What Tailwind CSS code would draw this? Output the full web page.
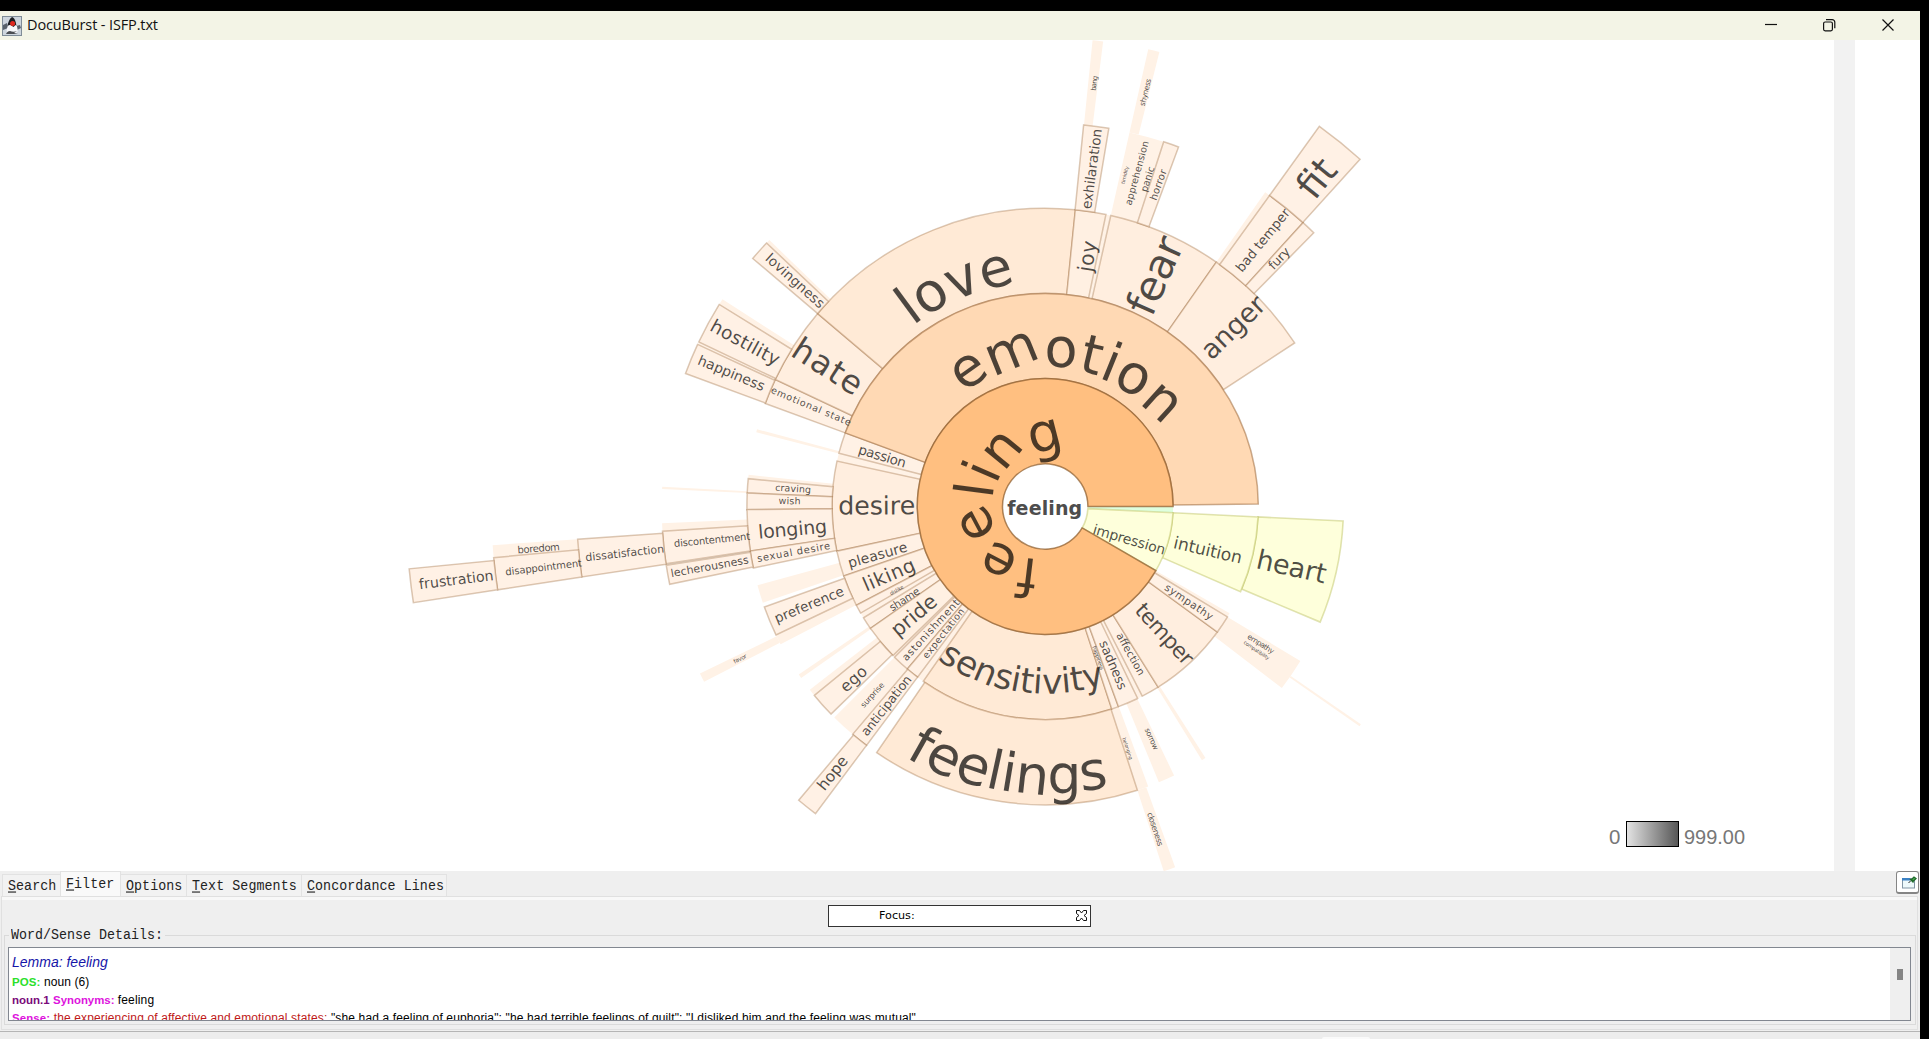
<!DOCTYPE html>
<html lang="en">
<head>
<meta charset="utf-8">
<title>DocuBurst - ISFP.txt</title>
<script src="https://cdn.jsdelivr.net/npm/@tailwindcss/browser@4"></script>
</head>
<body class="bg-black">
<div class="flex h-[1039px] w-[1920px] flex-col overflow-hidden bg-[#efefef] pt-0">
  <div class="h-[11px] shrink-0 bg-black"></div>

  <header class="flex h-[29px] shrink-0 items-center bg-[#f3f4e6] pl-[2px]">
    <svg class="h-5 w-5" viewBox="0 0 20 20">
      <rect x=".5" y=".5" width="19" height="19" fill="#cdd5dd" stroke="#7f8c97"/>
      <path d="M1 9l4-2 1 5-5 2zM14 10l4-1 1 3-4 2z" fill="#59626b"/>
      <path d="M10 1.500c3 1 4 5 5 9s1 6-1 6.500c-4 0-8 .5-9-1s0-4 1-6 2-7 4-8.500z" fill="#f7f8fa"/>
      <path d="M10 1c-3 2-4 6-4.500 9 1-1 2-1 3-1l3 2 2-2 1 1C14 6 13 2 10 1z" fill="#1d1f22"/>
      <circle cx="10.600" cy="7.500" r="2.500" fill="#e02a20"/>
      <path d="M4 18c1-2 2-3 4-3 2 1 5 1 7 0l-3 2 4 1z" fill="#4a4d52"/>
    </svg>
    <span class="mb-[1px] ml-[5px] w-[132px] whitespace-nowrap font-['Open_Sans',sans-serif] text-[14.500px] leading-[28px] tracking-[-0.130px] text-[#111]">DocuBurst - ISFP.txt</span>
    <svg class="mb-[1px] ml-auto mr-[24px] h-[14px] w-[132px]" viewBox="0 0 132 14" fill="none" stroke="#111" stroke-width="1.200">
      <path d="M1 6.500h12"/>
      <rect x="59.600" y="4" width="8.800" height="8.800" rx="1.500"/>
      <path d="M62 1.600h6.200a2.600 2.600 0 0 1 2.600 2.600v6"/>
      <path d="M118.500 1.500l11 11M129.500 1.500l-11 11"/>
    </svg>
  </header>

  <main class="flex h-[831px] shrink-0 bg-white">
    <svg id="burst" class="h-[831px] w-[1834px] shrink-0" viewBox="0 40 1834 831" font-family="'DejaVu Sans',sans-serif">
      <defs>
        <linearGradient id="ramp"><stop offset="0" stop-color="#e4e4e4"/><stop offset="1" stop-color="#555"/></linearGradient>
      </defs>
      <g id="sectors"></g>
      <g id="labels" fill="#000" fill-opacity=".7"></g>
      <text x="1044.700" y="514.500" text-anchor="middle" font-weight="bold" font-size="19" textLength="75" fill="#4d4d4d">feeling</text>
      <g font-family="'Liberation Sans',sans-serif" font-size="20.500" fill="#777">
        <text x="1609" y="844">0</text>
        <text x="1684" y="844" textLength="61" lengthAdjust="spacingAndGlyphs">999.00</text>
      </g>
      <rect x="1626.500" y="821.500" width="52" height="25" fill="url(#ramp)" stroke="#000"/>
    </svg>
    <div class="w-[21px] bg-[#f2f2f2]"></div>
  </main>

  <nav class="flex h-[25px] shrink-0 items-end pl-[2px] font-['Liberation_Mono',monospace] text-[13.330px] leading-[20px] tracking-[0.060px] text-[#222]">
    <div class="h-[22px] w-[58px] border-l border-t border-[#e2e2e2] bg-[#f2f2f2] pl-[5px] pt-[2px]"><span class="inline-block scale-y-[1.120]"><u>S</u>earch</span></div>
    <div class="h-[25px] w-[61px] border-x border-t border-[#e2e2e2] bg-[#f9f9f9] pl-[5px] pt-[3px]"><span class="inline-block scale-y-[1.120]"><u>F</u>ilter</span></div>
    <div class="h-[22px] w-[66px] border-r border-t border-[#e2e2e2] bg-[#f2f2f2] pl-[5px] pt-[2px]"><span class="inline-block scale-y-[1.120]"><u>O</u>ptions</span></div>
    <div class="h-[22px] w-[115px] whitespace-nowrap border-r border-t border-[#e2e2e2] bg-[#f2f2f2] pl-[5px] pt-[2px]"><span class="inline-block scale-y-[1.120]"><u>T</u>ext Segments</span></div>
    <div class="h-[22px] w-[145px] whitespace-nowrap border-r border-t border-[#e2e2e2] bg-[#f2f2f2] pl-[5px] pt-[2px]"><span class="inline-block scale-y-[1.120]"><u>C</u>oncordance Lines</span></div>
    <button class="mb-[2px] ml-auto mr-[1px] flex h-[23px] w-[23px] items-center justify-center rounded-[3px] border border-b-2 border-[#858585] bg-white pl-[3px]">
      <svg class="h-[14px] w-[15px]" viewBox="0 0 15 14">
        <rect x=".5" y="3.500" width="12" height="9.500" fill="#eef9fb" stroke="#8296a5"/>
        <rect x="0" y="3" width="8" height="2.500" fill="#3c82c4"/>
        <path d="M6.500 8l2.500-2.500" stroke="#222"/>
        <path d="M8 4l3.500 3.500M9.500 4.500l2.500-2.500 2 1.500-3 3z" stroke="#1f6b2c" stroke-width="1.300" fill="#55b055"/>
      </svg>
    </button>
  </nav>

  <section class="ml-[1px] mr-[2px] flex h-[134px] shrink-0 flex-col border border-[#e0e0e0]">
    <div class="h-[3px] shrink-0 bg-[#f8f8f8]"></div>
    <div class="flex h-[31px] shrink-0 items-start justify-center pt-[5px]">
      <div class="flex h-[22px] w-[263px] items-center border border-[#333] bg-white pl-[50px] font-['DejaVu_Sans',sans-serif] text-[11.200px] leading-[20px] text-black">
        Focus:
        <svg class="mb-[1px] ml-auto mr-[3px] h-[11px] w-[11px]" viewBox="0 0 11 11" fill="none" stroke="#111"><path d="M.5.5h3l2 2.500 2-2.500h3v3l-2.500 2 2.500 2v3h-3l-2-2.500-2 2.500h-3v-3l2.500-2-2.500-2z"/></svg>
      </div>
    </div>
    <div class="relative ml-[2px] mr-[1px] mt-[4px] h-[90px] border border-[#dadada] pl-[3px] pr-[4px] pt-[11px]">
      <span class="absolute -top-[8px] left-[4px] bg-[#efefef] px-[2px] font-['Liberation_Mono',monospace] text-[13.330px] leading-[16px] text-[#222]"><span class="inline-block scale-y-[1.120]">Word/Sense Details:</span></span>
      <div class="flex h-[74px] border border-[#828790] bg-white font-['Liberation_Sans',sans-serif] text-[12px] text-black">
        <div class="flex-1 overflow-hidden whitespace-nowrap pl-[3px] pt-[4px]">
          <p class="h-[20px] text-[14px] italic leading-[20px] text-[#1515a8]">Lemma: feeling</p>
          <p class="h-[18px] leading-[20px] tracking-[0.100px]"><b class="text-[11.500px] text-[#2be02b]">POS:</b> noun (6)</p>
          <p class="h-[18px] leading-[20px]"><b class="text-[11.500px] text-[#7a0a7a]">noun.1</b> <b class="text-[11.400px] text-[#dd12dd]">Synonyms:</b> <span class="tracking-[0.150px]">feeling</span></p>
          <p class="h-[18px] leading-[20px] tracking-[0.140px]"><b class="text-[11.400px] text-[#dd12dd]">Sense:</b> <span class="text-[#c01818]">the experiencing of affective and emotional states:</span> "she had a feeling of euphoria"; "he had terrible feelings of guilt"; "I disliked him and the feeling was mutual"</p>
        </div>
        <div class="w-[20px] bg-[#efefef] pl-[7px] pt-[21px]"><div class="h-[11px] w-[6px] bg-[#858585]"></div></div>
      </div>
    </div>
  </section>
  <footer class="mt-[1px] flex h-[8px] items-end border-t border-[#b5b5b5] bg-[#ededed]"><div class="ml-[1322px] h-[2px] w-[48px] rounded-t bg-[#fafafa]"></div></footer>
</div>

<script>
const NS = 'http://www.w3.org/2000/svg', CX = 1045.2, CY = 506.5;
const radius = k => 42.7 + 85.2 * k;
const rad = d => d * Math.PI / 180;
const pt = (r, a) => [CX + r * Math.cos(rad(a)), CY + r * Math.sin(rad(a))];
const add = (parent, tag, attrs, text) => {
  const el = document.createElementNS(NS, tag);
  for (const k in attrs) el.setAttribute(k, attrs[k]);
  if (text) el.textContent = text;
  document.getElementById(parent).append(el);
  return el;
};
function sector(k, a0, a1, fill, stroke, so, sw) {
  const r0 = radius(k), r1 = radius(k + 1), big = a1 - a0 > 180 ? 1 : 0;
  const p = [pt(r0, a0), pt(r1, a0), pt(r1, a1), pt(r0, a1)].map(q => q.map(v => v.toFixed(2)).join(' '));
  add('sectors', 'path', {
    d: `M${p[0]}L${p[1]}A${r1} ${r1} 0 ${big} 1 ${p[2]}L${p[3]}A${r0} ${r0} 0 ${big} 0 ${p[0]}Z`,
    fill, stroke: stroke || 'none', 'stroke-opacity': so || 1, 'stroke-width': sw || 1.5
  });
}
const BROWN = '#96602f', FAINT = '#fff2e6';
// unlabelled or low-count nodes: [level, from, to]
[[4,275.8,277.1],[4,282.7,284.1],[3,282.7,288],[3,305,305.8],[3,223.4,224],[3,211.8,212.7],[3,205,205.4],
 [2,281.8,282.6],[1,192.3,194.5],[2,194.4,195],[2,185.4,186.1],[3,182.6,182.95],[3,176.3,177.5],[5,174.7,176],
 [2,161.2,164.7],[2,152.5,154.5],[3,152.8,154.2],[2,144.9,145.7],[2,140.7,142.1],[2,130.2,135],
 [1,150,152.4],[1,148.5,150],[1,135,135.6],[1,124.9,126.8],[2,69.8,72],[3,70.2,72],[2,64.4,67.6],[1,62.9,64.3],
 [2,57.5,58.3],[1,30.1,31.2],[2,31.2,37.5],[3,34.6,34.95]].forEach(s => sector(...s, FAINT));

// labelled nodes: [level, from, to, fill]
[[2,200.2,205.2,'#fff1e5'],[2,205.2,220.3,'#ffeedf'],[2,220.3,275.8,'#ffead6'],[2,275.8,281.75,'#fff0e2'],
 [2,282.7,305,'#ffeedf'],[2,305,326.75,'#ffeedf'],
 [3,275.75,279.55],[3,288,290.35],[3,305.8,312.25],[3,312.25,314.45],[4,305.8,312.2],
 [3,220.3,223.4],[3,205.4,211.8],[3,200.3,205],
 [1,194.5,200.2],[1,167.9,192.3,'#ffeedf'],[2,182.6,185.35],[2,179.4,182.6],[2,171.4,179.4],[2,168.1,171.4],
 [3,171.4,176.3],[3,168.3,171.2],[4,171.35,176],[5,171.35,174.7],[6,171.35,174.4],
 [1,160.95,167.9],[1,152.4,160.95,'#fff0e2'],[1,150,152.4],[1,145.1,148.5],[1,135.6,145.1,'#fff0e2'],
 [1,130.3,135],[1,126.8,130.3],[1,71.8,124.9,'#ffead6'],[2,72,124.4,'#ffead6'],
 [1,69.9,71.8],[1,64.3,69.9],[1,58,62.9],[1,36.1,58,'#ffeedf'],[1,31.2,36.1],
 [2,154.5,160.3],[2,135.9,140.7],[2,126.8,130.2],[3,126.8,130]
].forEach(([k, a, b, f]) => sector(k, a, b, f || '#fff1e5', BROWN, .34));
sector(1, 200.2, 359.3, '#ffd9b4', BROWN, .5);
sector(0, 0, 2.8, '#dfffdf');
sector(2, 2.8, 22.8, '#feffdb', '#b4ba50', .42, 1.6);
sector(1, 2.8, 23.6, '#feffdb', '#b4ba50', .42, 1.6);
sector(0, 2.8, 30.1, '#feffdb', '#b4ba50', .42, 1.6);
sector(0, 30.1, 360, '#ffbf80', '#8a5a2a', .7);

// straight labels: [text, level, angle, size, length, radial shift, drop below the radius, turn]
[['passion',1,197,13.5,49],['desire',1,179.8,25.3,77,-2],['pleasure',1,164.2,14,61,4,2],['liking',1,156.6,19.5,55,0,2],
 ['dislike',1,150.7,5,15],['shame',1,147,10.5,34,-2,2],['pride',1,140.2,20.5,53,0,1],['astonishment',1,132.6,10.3,79,-2,0],
 ['expectation',1,128.5,9.5,61,-8,0],['happiness',1,70.9,5.5,25,-10,0],['sadness',1,67.1,13,52,2,0],['affection',1,60.5,10.5,47,0,-1],
 ['temper',1,47.4,21.5,75,4,0],['sympathy',1,33.8,10.5,56,2,0],
 ['emotional state',2,202.8,9.5,86,-1,-1],['hate',2,212.8,32.5,77,3,2.5],['joy',2,279.2,20.5,31,-2,3],['fear',2,293.9,41.5,81,0,10],
 ['anger',2,316,27,78,4,3.5],['craving',2,184,9.5,36,-3],['wish',2,181.2,9.5,22],['longing',2,174.9,19,69,-2,1.5],
 ['sexual desire',2,169.8,10,74,0,1],['preference',2,157.4,13.6,74,0,1],['ego',2,138,15.8,30,2,1],['surprise',2,132.5,8,31],
 ['anticipation',2,128.4,12.6,73,-1,0],['empathy',2,32.5,7.5,30],['compatibility',2,34.2,5,30],['sorrow',2,65.4,7.5,23],
 ['belonging',2,71.2,5,23],
 ['exhilaration',3,277.7,13.7,81,0,2],['timidity',3,283.5,5,18],['apprehension',3,285.4,9.5,66,5],['panic',3,287.3,9.5,26,2,1],
 ['horror',3,289.4,10,32],['bad temper',3,309,13.2,77,3,2.5],['fury',3,313.4,12.6,25],['lovingness',3,221.9,13.7,74,-4,0],
 ['hostility',3,208.6,18.5,76,1,1],['happiness',3,202.6,14,71,0,-1.5],['discontentment',3,174.4,10,76.5,-6,1.5],
 ['lecherousness',3,169.9,11,79,0,1],['favor',3,153.5,6,14],['hope',3,128.5,15.5,39],['closeness',3,71.2,8,35],
 ['bang',4,276.6,7,15],['shyness',4,283.6,7.5,28],['fit',4,309,38,39,0,7],['dissatisfaction',4,173.7,11,79,-3,1],
 ['boredom',5,175.3,10,42.5,-3,1],['disappointment',5,173.1,10,77,-6,1],['frustration',6,173,14.3,75,-3,2],
 ['impression',0,21.5,14,75,5,1,16.4],['intuition',1,15.8,17.2,70,-2,-1,13],['heart',2,14.4,27,71,-2,-1,12.6]
].forEach(([t, k, a, size, len, dr = 0, drop = .5, turn = a]) => {
  const [x, y] = pt((radius(k) + radius(k + 1)) / 2 + dr, a);
  const rot = Math.cos(rad(a)) > 0 ? turn : turn - 180;
  add('labels', 'text', {
    transform: `translate(${x.toFixed(2)} ${y.toFixed(2)}) rotate(${rot})`, 'text-anchor': 'middle',
    y: (size * .27 + drop).toFixed(2), 'font-size': size, textLength: len
  }, t);
});

// curved labels: each glyph starts on the baseline circle and is turned to its tangent
const ctx = document.createElement('canvas').getContext('2d');
function curved(text, mid, r, size, dir) {
  ctx.font = `100px "DejaVu Sans"`;
  const adv = [...text].map(c => ctx.measureText(c).width * size / 100 / r * 180 / Math.PI);
  let a = mid - dir * adv.reduce((s, v) => s + v, 0) / 2;
  const xs = [], ys = [], rs = [];
  adv.forEach(v => {
    const [x, y] = pt(r, a);
    xs.push(x.toFixed(2)); ys.push(y.toFixed(2)); rs.push((a + dir * 90).toFixed(2));
    a += dir * v;
  });
  add('labels', 'text', { x: xs.join(' '), y: ys.join(' '), rotate: rs.join(' '), 'font-size': size }, text);
}
curved('feeling', 194.5, 53.5, 53.5, 1);
curved('emotion', 280.2, 139.5, 54.2, 1);
curved('love', 248.2, 224, 54, 1);
curved('sensitivity', 98.35, 187, 34.5, -1);
curved('feelings', 98.2, 287, 53.6, -1);
</script>
</body>
</html>
